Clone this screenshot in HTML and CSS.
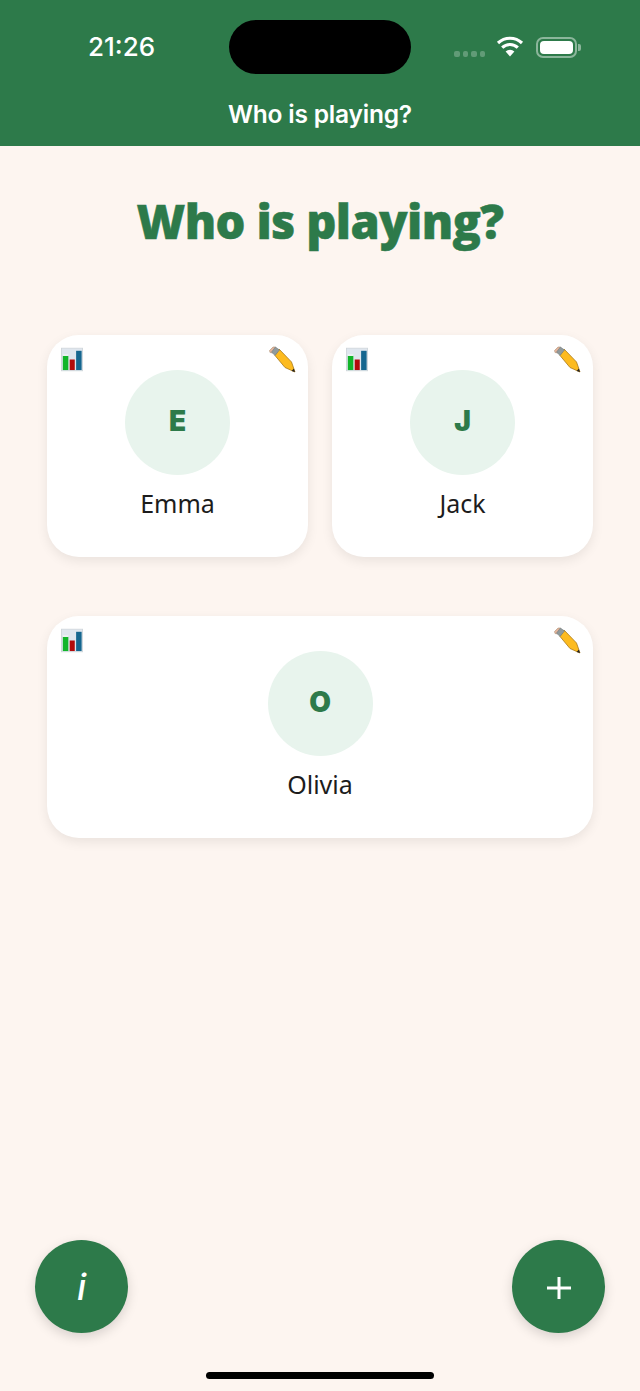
FILE: index.html
```html
<!DOCTYPE html>
<html lang="en">
<head>
    <meta charset="UTF-8">
    <meta name="viewport" content="width=device-width, initial-scale=1.0">
    <title>Who is playing?</title>
    <link rel="stylesheet" href="styles.css">
</head>
<body>
    <div class="screen">
        <header class="top-bar">
            <div class="status-bar">
                <div class="clock">21:26</div>
                <div class="island"></div>
                <div class="status-icons">
                    <div class="signal"><span></span><span></span><span></span><span></span></div>
                    <svg class="wifi" width="28" height="21" viewBox="0 0 28 21">
                        <path d="M14 20.500 9.600 15.600a6.400 6.400 0 0 1 8.800 0Z" fill="#fff"/>
                        <path d="M6.200 11.600a11.400 11.400 0 0 1 15.600 0" fill="none" stroke="#fff" stroke-width="3.200"/>
                        <path d="M2 7a17.600 17.600 0 0 1 24 0" fill="none" stroke="#fff" stroke-width="3.200"/>
                    </svg>
                    <div class="battery"><div class="battery-level"></div></div>
                    <div class="battery-cap"></div>
                </div>
            </div>
            <div class="nav-title">Who is playing?</div>
        </header>

        <main class="content">
            <h1 class="page-title">Who is playing?</h1>

            <div class="players">
                <div class="player-card">
                    <div class="card-icons">
                        <svg class="chart-icon" width="22" height="25" viewBox="0 0 24 26"><use href="#chart"/></svg>
                        <svg class="pencil-icon" width="28" height="28" viewBox="0 0 28 28"><use href="#pencil"/></svg>
                    </div>
                    <div class="avatar">E</div>
                    <div class="player-name">Emma</div>
                </div>
                <div class="player-card">
                    <div class="card-icons">
                        <svg class="chart-icon" width="22" height="25" viewBox="0 0 24 26"><use href="#chart"/></svg>
                        <svg class="pencil-icon" width="28" height="28" viewBox="0 0 28 28"><use href="#pencil"/></svg>
                    </div>
                    <div class="avatar">J</div>
                    <div class="player-name">Jack</div>
                </div>
                <div class="player-card wide">
                    <div class="card-icons">
                        <svg class="chart-icon" width="22" height="25" viewBox="0 0 24 26"><use href="#chart"/></svg>
                        <svg class="pencil-icon" width="28" height="28" viewBox="0 0 28 28"><use href="#pencil"/></svg>
                    </div>
                    <div class="avatar">O</div>
                    <div class="player-name">Olivia</div>
                </div>
            </div>
        </main>

        <div class="fab-row">
            <div class="fab fab-info">i</div>
            <div class="fab">
                <svg class="plus" width="24" height="22" viewBox="0 0 24 22"><path d="M12 0v22M0 11h24" stroke="#fff" stroke-width="3"/></svg>
            </div>
        </div>

        <div class="home-row"><div class="home-bar"></div></div>
    </div>

    <svg class="defs" width="0" height="0">
        <symbol id="chart" viewBox="0 0 24 26">
            <rect x="0.500" y="0.500" width="23" height="25" fill="#dfe6ee" stroke="#cfd6da" stroke-width="1"/>
            <rect x="2" y="9" width="6" height="15.500" fill="#12b52a"/>
            <rect x="2" y="7.500" width="6" height="1.500" fill="#f4f7f7"/>
            <rect x="9.500" y="13" width="5.500" height="11.500" fill="#b30a0a"/>
            <rect x="16.500" y="3.500" width="6" height="21" fill="#15668f"/>
        </symbol>
        <symbol id="pencil" viewBox="0 0 28 28">
            <path d="M7 10.500 11 4 23.500 17 27 27 17 22.500Z" fill="#fdbb1f" stroke="#a8791b" stroke-width="0.800"/>
            <path d="M23.600 26 25.800 23.500 27 27Z" fill="#222"/>
            <path d="M1.500 5.500 5 2 7.500 2 5 8 2 7.500Z" fill="#e3b49b" stroke="#b09478" stroke-width="0.600"/>
            <path d="M3.500 7 7.500 2 11.500 5 7 10.500Z" fill="#8f9a9c" stroke="#6d7577" stroke-width="0.500"/>
        </symbol>
    </svg>
</body>
</html>
```

FILE: styles.css
```css
* {
    box-sizing: border-box;
}
body {
    margin: 0;
    background-color: #fdf5f0;
    font-family: "Noto Sans", sans-serif;
}
.screen {
    width: 640px;
    height: 1391px;
    display: flex;
    flex-direction: column;
    overflow: hidden;
}
.top-bar {
    height: 146px;
    background-color: #2d7a4a;
    color: #fff;
    padding-top: 20px;
}
.status-bar {
    height: 53px;
    display: grid;
    grid-template-columns: 229px 182px 229px;
}
.clock {
    font-family: Inter, sans-serif;
    font-size: 26px;
    font-weight: 500;
    line-height: 54px;
    padding-left: 88px;
}
.island {
    background-color: #000;
    border-radius: 27px;
}
.status-icons {
    display: flex;
    align-items: center;
    padding-left: 43px;
}
.signal {
    display: flex;
    gap: 3px;
    margin-top: 13px;
    margin-right: 11px;
}
.signal span {
    width: 5.500px;
    height: 6px;
    border-radius: 2px;
    background-color: #fff;
    opacity: 0.25;
}
.wifi {
    margin-right: 12px;
    margin-top: -2px;
}
.battery {
    width: 41px;
    height: 21px;
    border: 2px solid rgba(255, 255, 255, 0.45);
    border-radius: 7px;
    padding: 2px;
}
.battery-level {
    height: 100%;
    background-color: #fff;
    border-radius: 4px;
}
.battery-cap {
    width: 3px;
    height: 7px;
    margin-left: 1px;
    background-color: rgba(255, 255, 255, 0.45);
    border-radius: 0 2px 2px 0;
}
.nav-title {
    font-family: Inter, sans-serif;
    font-size: 24.500px;
    font-weight: 600;
    text-align: center;
    margin-top: 26px;
    line-height: 30px;
    letter-spacing: -0.200px;
}
.content {
    flex: 1;
    padding: 0 47px;
}
.page-title {
    margin: 46px 0 0;
    font-family: "Open Sans", sans-serif;
    font-size: 47px;
    font-weight: 800;
    line-height: 58px;
    letter-spacing: -0.650px;
    color: #2d7a4a;
    -webkit-text-stroke: 0.500px #2d7a4a;
    text-align: center;
}
.players {
    margin-top: 85px;
    display: grid;
    grid-template-columns: 261px 261px;
    column-gap: 24px;
    row-gap: 59px;
}
.player-card {
    height: 222px;
    background-color: #fff;
    border-radius: 32px;
    box-shadow: 0 4px 12px rgba(0, 0, 0, 0.08);
    padding: 10px 13px 0;
    display: flex;
    flex-direction: column;
    align-items: center;
}
.player-card.wide {
    grid-column: 1 / 3;
}
.card-icons {
    width: 100%;
    height: 25px;
    display: flex;
    justify-content: space-between;
}
.chart-icon {
    margin: 2px 0 0 1px;
}
.pencil-icon {
    margin-right: -1px;
}
.avatar {
    width: 105px;
    height: 105px;
    border-radius: 50%;
    background-color: #e8f4ed;
    color: #2d7a4a;
    font-family: Inter, sans-serif;
    font-size: 28px;
    font-weight: 900;
    line-height: 103px;
    text-align: center;
}
.player-name {
    margin-top: 12px;
    font-size: 25px;
    line-height: 32px;
    color: #1c1c1c;
}
.fab-row {
    display: flex;
    justify-content: space-between;
    padding: 0 35px;
}
.fab {
    width: 93px;
    height: 93px;
    border-radius: 50%;
    background-color: #2d7a4a;
    color: #fff;
    box-shadow: 0 4px 12px rgba(0, 0, 0, 0.15);
    display: flex;
    align-items: center;
    justify-content: center;
}
.plus {
    margin-top: 3px;
}
.fab-info {
    font-family: Inter, sans-serif;
    font-size: 36px;
    font-style: italic;
    font-weight: 500;
}
.home-row {
    height: 58px;
    padding-top: 39px;
    display: flex;
    justify-content: center;
}
.home-bar {
    width: 228px;
    height: 7px;
    background-color: #000;
    border-radius: 4px;
}
.defs {
    position: absolute;
}
```
